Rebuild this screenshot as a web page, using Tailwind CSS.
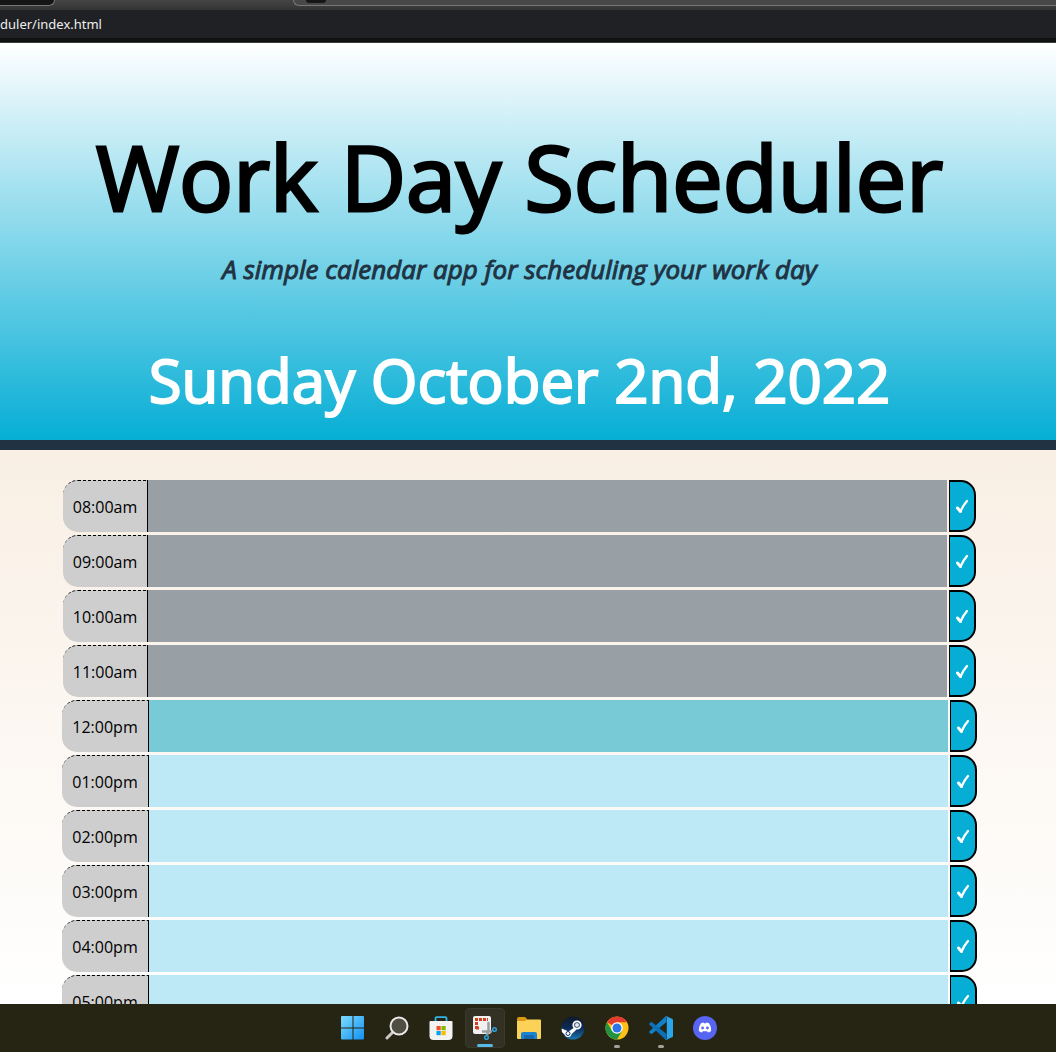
<!DOCTYPE html>
<html lang="en">
<head>
<meta charset="utf-8">
<title>Work Day Scheduler</title>
<script src="https://cdn.jsdelivr.net/npm/@tailwindcss/browser@4"></script>
</head>
<body class="flex h-screen flex-col overflow-hidden font-['Open_Sans',sans-serif] text-black">

<!-- Browser chrome -->
<div class="shrink-0 border-b border-[#3a3a3c] bg-[#202124]">
  <div class="flex h-[10px] items-start justify-between overflow-hidden bg-linear-to-b from-[#454545] to-[#343434]">
    <div class="h-[6px] w-[55px] rounded-br-lg border-r border-b border-[#777] bg-[#151515]"></div>
    <div class="ml-[238px] flex h-[6px] flex-1 items-start rounded-bl-lg border-b border-l border-[#777] bg-[#484848] pl-3">
      <div class="h-[3px] w-[20px] rounded-b-full bg-[#161616]"></div>
    </div>
  </div>
  <div class="flex h-[28px] items-center pt-px font-['Noto_Sans',sans-serif] text-[13px] text-[#eeeeee]">duler/index.html</div>
  <div class="h-[4px] bg-[#121212]"></div>
</div>

<!-- Page -->
<div class="min-h-0 flex-1 overflow-hidden bg-linear-to-b/srgb from-[#f9efe4] from-[408px] to-[#ffffff]">
  <header class="flex h-[407px] flex-col items-center border-b-10 border-[#213343] bg-linear-to-b/srgb from-white to-[#06aed5] pr-[17px] text-center whitespace-nowrap">
    <h1 class="mt-[76px] text-[90px] leading-[115px] [-webkit-text-stroke:3px_#000]">Work Day Scheduler</h1>
    <p class="mt-[15px] text-[26px] leading-[40px] text-[#213343] italic [-webkit-text-stroke:1px_#213343]">A simple calendar app for scheduling your work day</p>
    <p class="mt-[55px] text-[60px] leading-[72px] text-white [-webkit-text-stroke:2px_#fff]">Sunday October 2nd, 2022</p>
  </header>
  <main id="hours" class="flex flex-col items-center gap-[3px] pt-[30px] pr-[17px]"></main>
</div>

<!-- Taskbar -->
<nav aria-label="Taskbar" class="flex h-12 shrink-0 items-center justify-center gap-1 bg-[#262413] pl-[2px]">
  <button aria-label="Start" class="flex size-10 items-center justify-center">
    <svg class="size-6" viewBox="0 0 24 24"><defs><linearGradient id="win" x1="0" y1="0" x2="1" y2="1"><stop stop-color="#7ddcff"/><stop offset="1" stop-color="#1190f0"/></linearGradient></defs><path fill="url(#win)" d="M1 0h10.500v11.500H0V1a1 1 0 0 1 1-1zM12.500 0H22a1 1 0 0 1 1 1v10.500H12.500zM0 12.500h11.500V23.500H1a1 1 0 0 1-1-1zM12.500 12.500H23v10a1 1 0 0 1-1 1h-9.500z"/></svg>
  </button>
  <button aria-label="Search" class="flex size-10 items-center justify-center">
    <svg class="size-6" viewBox="0 0 24 24" fill="none"><path d="M8 16l-6 6" stroke="#c9c9c7" stroke-width="3" stroke-linecap="round"/><circle cx="14" cy="10" r="8.500" fill="#4f4e42" stroke="#e8e8e6" stroke-width="2"/></svg>
  </button>
  <button aria-label="Store" class="flex size-10 items-center justify-center">
    <svg class="size-6" viewBox="0 0 24 24"><path d="M6.500 6V2.200a1 1 0 0 1 1-1h9a1 1 0 0 1 1 1V6" fill="none" stroke="#35b3e6" stroke-width="1.800"/><path d="M1.500 5h21a1 1 0 0 1 1 1v14a4 4 0 0 1-4 4h-15a4 4 0 0 1-4-4V6a1 1 0 0 1 1-1z" fill="#f3f3f3"/><path fill="#f25022" d="M7.500 10h4.200v4.200H7.500z"/><path fill="#7fba00" d="M12.500 10h4.200v4.200h-4.200z"/><path fill="#00a4ef" d="M7.500 15h4.200v4.200H7.500z"/><path fill="#ffb900" d="M12.500 15h4.200v4.200h-4.200z"/></svg>
  </button>
  <button aria-label="Snipping Tool" class="relative flex size-10 items-center justify-center rounded border border-[#3b392a] bg-[#333123]">
    <svg class="size-6" viewBox="0 0 24 24"><rect x="0" y="0" width="18" height="18" rx="2" fill="#f1f1f1"/><path d="M3.500 13V3.500H15M3 12h4" fill="none" stroke="#d0401f" stroke-width="3" stroke-dasharray="3 1"/><path d="M15.500 6v9l-1.500 4M9 15.500h10" fill="none" stroke="#9a9da0" stroke-width="2.500"/><circle cx="21.500" cy="13.500" r="1.800" fill="#262413" stroke="#2aa3e0" stroke-width="1.500"/><circle cx="13.500" cy="21.500" r="1.800" fill="#262413" stroke="#2aa3e0" stroke-width="1.500"/></svg>
    <span class="absolute bottom-0 h-[3px] w-4 rounded-full bg-[#58b8e8]"></span>
  </button>
  <button aria-label="File Explorer" class="flex size-10 items-center justify-center">
    <svg class="size-6" viewBox="0 0 24 24"><path d="M0 3a2 2 0 0 1 2-2h6l2 2v4H0z" fill="#d99a12"/><path d="M0 5h8l2-1.500h13a1 1 0 0 1 1 1V22a1 1 0 0 1-1 1H1a1 1 0 0 1-1-1z" fill="#fbd257"/><path d="M4 23v-5a2 2 0 0 1 2-2h12a2 2 0 0 1 2 2v5z" fill="#1b83cf"/><path d="M7 19h10v4H7z" fill="#1568ae"/></svg>
  </button>
  <button aria-label="Steam" class="flex size-10 items-center justify-center">
    <svg class="size-6" viewBox="0 0 24 24"><defs><linearGradient id="steam" x1="0" y1="0" x2="0" y2="1"><stop stop-color="#10182c"/><stop offset=".5" stop-color="#0e2a56"/><stop offset="1" stop-color="#1877b2"/></linearGradient></defs><circle cx="12" cy="12" r="11.500" fill="url(#steam)"/><path d="M.6 12.500l7 3 5-3.500 4-1.500-2 4-4 3.500a3.600 3.600 0 0 1-7 .5L.9 16z" fill="#fff"/><circle cx="16" cy="9" r="3.700" fill="#17345f" stroke="#fff" stroke-width="1.800"/><circle cx="16" cy="9" r="2" fill="#e6eaf0"/><circle cx="7" cy="17.500" r="2" fill="none" stroke="#17345f" stroke-width="1"/></svg>
  </button>
  <button aria-label="Chrome" class="relative flex size-10 items-center justify-center">
    <svg class="size-6" viewBox="0 0 24 24"><circle cx="12" cy="12" r="11.500" fill="#fbc116"/><path d="M12 12L2.040 6.250A11.500 11.500 0 0 1 21.960 6.250H12z" fill="#e33b2e"/><path d="M2.040 6.250A11.500 11.500 0 0 0 12 23.500L17 15 12 12 7 14.900z" fill="#229342"/><circle cx="12" cy="12" r="5.800" fill="#fff"/><circle cx="12" cy="12" r="4.500" fill="#2a75e8"/></svg>
    <span class="absolute bottom-0 h-[3px] w-1.5 rounded-full bg-[#a3a29a]"></span>
  </button>
  <button aria-label="Visual Studio Code" class="relative flex size-10 items-center justify-center">
    <svg class="size-6" viewBox="0 0 24 24"><path d="M17.500 6L2.500 18.300.3 16.600a.8.8 0 0 1 0-1.200L17 0z" fill="#1080c8"/><path d="M17.500 18L2.500 5.700.3 7.400a.8.8 0 0 0 0 1.200L17 24z" fill="#0b70b8"/><path d="M17 0l6 2.700a1.500 1.500 0 0 1 1 1.400v15.800a1.500 1.500 0 0 1-1 1.400L17 24l-.5-1c.6.400 1.300 0 1.300-.8V1.800c0-.8-.7-1.200-1.300-.8z" fill="#2ba5ec"/></svg>
    <span class="absolute bottom-0 h-[3px] w-1.5 rounded-full bg-[#a3a29a]"></span>
  </button>
  <button aria-label="Discord" class="flex size-10 items-center justify-center">
    <svg class="size-6" viewBox="0 0 24 24"><circle cx="12" cy="12" r="12" fill="#5865f2"/><path d="M8 7.200c1-.5 1.800-.7 2.500-.8l.5.900h2l.5-.9c.7.100 1.500.3 2.500.8 1.700 2.500 2.300 5 2.100 7.800-1 .8-2 1.300-3.100 1.600l-.8-1.300H9.800L9 16.600c-1.100-.3-2.100-.8-3.100-1.600-.2-2.800.4-5.300 2.100-7.800z" fill="#fff"/><circle cx="9.600" cy="12" r="1.400" fill="#5865f2"/><circle cx="14.400" cy="12" r="1.400" fill="#5865f2"/></svg>
  </button>
</nav>

<script>
  const states = {
    past: { row: "w-[913px]", label: "w-[85px]", area: "bg-[#98a0a6]" },
    present: { row: "w-[915px]", label: "w-[87px]", area: "bg-[#77cad6]" },
    future: { row: "w-[915px]", label: "w-[87px]", area: "bg-[#bde9f6]" },
  };
  const hours = [
    ["08:00am", "past"], ["09:00am", "past"], ["10:00am", "past"], ["11:00am", "past"],
    ["12:00pm", "present"],
    ["01:00pm", "future"], ["02:00pm", "future"], ["03:00pm", "future"], ["04:00pm", "future"], ["05:00pm", "future"],
  ];
  document.getElementById("hours").innerHTML = hours.map(([time, state], i) => {
    const s = states[state];
    return `<div class="flex h-[52px] ${s.row}">
      <label for="h${i}" class="flex shrink-0 items-center justify-center rounded-l-[15px] border-t border-r border-t-black border-r-black [border-top-style:dashed] bg-[#cecece] text-[16px] font-medium ${s.label}">${time}</label>
      <textarea id="h${i}" class="block min-w-0 flex-1 resize-none ${s.area}"></textarea>
      <button aria-label="Save ${time}" class="ml-[2px] flex w-[27px] shrink-0 items-center justify-center rounded-r-[15px] border-2 border-l border-black bg-[#06aed5]">
        <svg class="h-[16px] w-[14px]" viewBox="0 0 14 16" fill="none" stroke="#fff" stroke-linecap="round" stroke-linejoin="round"><path d="M2.500 10L5.500 13.500" stroke-width="3"/><path d="M5.500 13.500Q8 7.500 12 3" stroke-width="2.300"/></svg>
      </button>
    </div>`;
  }).join("");
</script>
</body>
</html>
